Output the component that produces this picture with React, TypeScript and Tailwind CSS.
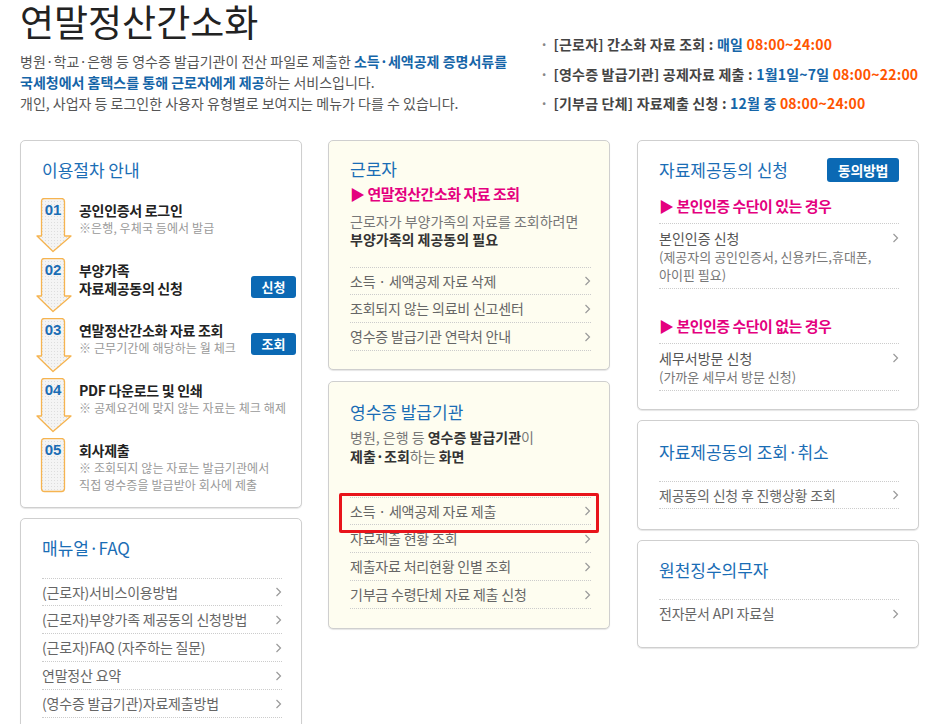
import React from 'react';

const Chevron = () => (
  <svg width="7" height="10" viewBox="0 0 7 10" className="shrink-0">
    <polyline points="1.5,1 5.5,5 1.5,9" fill="none" stroke="#9a9a9a" strokeWidth="1.2" />
  </svg>
);

function StepIcon({ num, last }: { num: string; last?: boolean }) {
  return (
    <div className="relative w-[36px] h-[54px] shrink-0">
      <svg width="36" height="56" className="absolute left-0 top-0">
        <defs>
          <pattern id={`dots-${num}`} width="3" height="3" patternUnits="userSpaceOnUse">
            <rect width="3" height="3" fill="#f4f4f4" />
            <rect width="1" height="1" fill="#dddddd" />
          </pattern>
        </defs>
        {last ? (
          <rect x="5.5" y="0.5" width="23" height="53" rx="3" fill={`url(#dots-${num})`} stroke="#f6b450" strokeWidth="1.3" />
        ) : (
          <path
            d="M5.5,38 L5.5,3.5 Q5.5,0.5 8.5,0.5 L25.5,0.5 Q28.5,0.5 28.5,3.5 L28.5,38 L35,38 L17,53.5 L1,38 Z"
            fill={`url(#dots-${num})`}
            stroke="#f6b450"
            strokeWidth="1.3"
            strokeLinejoin="round"
          />
        )}
      </svg>
      <span className="absolute left-[5px] top-[2px] w-[24px] text-center text-[15px] leading-[20px] font-bold text-[#1a6db5] font-['Liberation_Sans',sans-serif]">
        {num}
      </span>
    </div>
  );
}

const steps = [
  { num: '01', title: ['공인인증서 로그인'], sub: ['※은행, 우체국 등에서 발급'] },
  { num: '02', title: ['부양가족', '자료제공동의 신청'], sub: [], btn: '신청', btnTop: 'mt-[18px]' },
  { num: '03', title: ['연말정산간소화 자료 조회'], sub: ['※ 근무기간에 해당하는 월 체크'], btn: '조회', btnTop: 'mt-[15px]' },
  { num: '04', title: ['PDF 다운로드 및 인쇄'], sub: ['※ 공제요건에 맞지 않는 자료는 체크 해제'] },
  { num: '05', title: ['회사제출'], sub: ['※ 조회되지 않는 자료는 발급기관에서', '직접 영수증을 발급받아 회사에 제출'] },
];

const faqs = [
  '(근로자)서비스이용방법',
  '(근로자)부양가족 제공동의 신청방법',
  '(근로자)FAQ (자주하는 질문)',
  '연말정산 요약',
  '(영수증 발급기관)자료제출방법',
];

function Card({ children, cream, className = '' }: { children: React.ReactNode; cream?: boolean; className?: string }) {
  return (
    <div
      className={`border border-[#cfcfcf] rounded-[5px] shadow-[0_1px_1px_rgba(0,0,0,0.1)] ${
        cream ? 'bg-[#fefdf0]' : 'bg-white'
      } ${className}`}
    >
      {children}
    </div>
  );
}

function LinkRow({ label, first }: { label: string; first?: boolean }) {
  return (
    <div
      className={`flex items-center justify-between h-[28px] border-b border-dotted border-[#cccccc] ${
        first ? 'border-t' : ''
      }`}
    >
      <span className="text-[14px] text-[#666] tracking-[-0.2px]">{label}</span>
      <Chevron />
    </div>
  );
}

export default function App() {
  return (
    <div className="w-[931px] h-[724px] overflow-hidden bg-white font-['Noto_Sans_CJK_KR','Noto_Sans',sans-serif] text-[#555]">
      {/* Header */}
      <div className="flex h-[140px] pl-[20px]">
        <div className="w-[520px] shrink-0">
          <h1 className="text-[37px] leading-[42px] text-[#222]">연말정산간소화</h1>
          <p className="mt-[9px] text-[14px] leading-[21px] text-[#555]">
            병원·학교·은행 등 영수증 발급기관이 전산 파일로 제출한{' '}
            <b className="text-[#1565a8]">소득·세액공제 증명서류를</b>
            <br />
            <b className="text-[#1565a8]">국세청에서 홈택스를 통해 근로자에게 제공</b>하는 서비스입니다.
            <br />
            개인, 사업자 등 로그인한 사용자 유형별로 보여지는 메뉴가 다를 수 있습니다.
          </p>
        </div>
        <ul className="pt-[30px] text-[14px] leading-[29.5px] font-bold text-[#444] tracking-[0.2px]">
          <li className="flex gap-[5px]">
            <span className="text-[#888]">·</span>
            <span>
              [근로자] 간소화 자료 조회 : <span className="text-[#1565a8]">매일</span>{' '}
              <span className="text-[#ff5500]">08:00~24:00</span>
            </span>
          </li>
          <li className="flex gap-[5px]">
            <span className="text-[#888]">·</span>
            <span>
              [영수증 발급기관] 공제자료 제출 : <span className="text-[#1565a8]">1월1일~7일</span>{' '}
              <span className="text-[#ff5500]">08:00~22:00</span>
            </span>
          </li>
          <li className="flex gap-[5px]">
            <span className="text-[#888]">·</span>
            <span>
              [기부금 단체] 자료제출 신청 : <span className="text-[#1565a8]">12월 중</span>{' '}
              <span className="text-[#ff5500]">08:00~24:00</span>
            </span>
          </li>
        </ul>
      </div>

      {/* Columns */}
      <div className="flex pl-[20px]">
        {/* Left column */}
        <div className="w-[282px] shrink-0 flex flex-col gap-[10px]">
          <Card className="h-[368px] pt-[17px] pl-[15px] pr-[5px]">
            <h2 className="pl-[6px] text-[17px] leading-[24px] text-[#1a6db5]">이용절차 안내</h2>
            <div className="mt-[16px] flex flex-col gap-[6px]">
              {steps.map((s, i) => (
                <div key={s.num} className="flex">
                  <StepIcon num={s.num} last={i === steps.length - 1} />
                  <div className="flex-1 pl-[7px] pt-[3px]">
                    {s.title.map((t) => (
                      <div key={t} className="text-[14px] leading-[18px] font-bold text-[#222] tracking-[-0.3px]">
                        {t}
                      </div>
                    ))}
                    {s.sub.map((t) => (
                      <div key={t} className="text-[12px] leading-[17px] text-[#999] tracking-[0.1px]">
                        {t}
                      </div>
                    ))}
                  </div>
                  {s.btn && (
                    <div
                      className={`${s.btnTop} h-[22px] w-[45px] shrink-0 rounded-[3px] bg-[#0b69b4] text-white text-[13px] leading-[22px] font-bold text-center`}
                    >
                      {s.btn}
                    </div>
                  )}
                </div>
              ))}
            </div>
          </Card>

          <Card className="h-[260px] pt-[17px] pl-[21px] pr-[19px]">
            <h2 className="text-[17px] leading-[24px] text-[#1a6db5]">매뉴얼·FAQ</h2>
            <div className="mt-[18px]">
              {faqs.map((f, i) => (
                <LinkRow key={f} label={f} first={i === 0} />
              ))}
            </div>
          </Card>
        </div>

        {/* Middle column */}
        <div className="w-[282px] shrink-0 ml-[26px] flex flex-col gap-[11px]">
          <Card cream className="h-[230px] pt-[16px] pl-[21px] pr-[18px]">
            <h2 className="text-[17px] leading-[24px] text-[#1a6db5]">근로자</h2>
            <div className="mt-[3px] text-[15px] leading-[20px] font-bold text-[#e4007f] tracking-[-0.5px]">
              ▶ 연말정산간소화 자료 조회
            </div>
            <p className="mt-[8px] text-[14px] leading-[18px] text-[#777]">
              근로자가 부양가족의 자료를 조회하려면
              <br />
              <b className="text-[#333]">부양가족의 제공동의 필요</b>
            </p>
            <div className="mt-[19px]">
              <LinkRow label="소득 · 세액공제 자료 삭제" first />
              <LinkRow label="조회되지 않는 의료비 신고센터" />
              <LinkRow label="영수증 발급기관 연락처 안내" />
            </div>
          </Card>

          <Card cream className="h-[248px] pt-[18px] pl-[21px] pr-[18px]">
            <h2 className="text-[17px] leading-[24px] text-[#1a6db5]">영수증 발급기관</h2>
            <p className="mt-[4px] text-[14px] leading-[19px] text-[#777]">
              병원, 은행 등 <b className="text-[#333]">영수증 발급기관</b>이
              <br />
              <b className="text-[#333]">제출·조회</b>하는 <b className="text-[#333]">화면</b>
            </p>
            <div className="mt-[31px]">
              <div className="relative">
                <LinkRow label="소득 · 세액공제 자료 제출" first />
                <div className="absolute -left-[11px] -right-[8px] -top-[4px] -bottom-[8px] border-[3px] border-[#e8141b] rounded-[2px]" />
              </div>
              <LinkRow label="자료제출 현황 조회" />
              <LinkRow label="제출자료 처리현황 인별 조회" />
              <LinkRow label="기부금 수령단체 자료 제출 신청" />
            </div>
          </Card>
        </div>

        {/* Right column */}
        <div className="w-[282px] shrink-0 ml-[27px] flex flex-col gap-[10px]">
          <Card className="h-[270px] pt-[17px] pl-[21px] pr-[19px]">
            <div className="flex items-center justify-between">
              <h2 className="text-[17px] leading-[24px] text-[#1a6db5]">자료제공동의 신청</h2>
              <div className="h-[24px] w-[72px] rounded-[3px] bg-[#0b69b4] text-white text-[14px] leading-[24px] font-bold text-center tracking-[-0.3px]">
                동의방법
              </div>
            </div>
            <div className="mt-[14px] text-[15px] leading-[20px] font-bold text-[#e4007f] tracking-[-0.5px]">
              ▶ 본인인증 수단이 있는 경우
            </div>
            <div className="mt-[7px] border-t border-b border-dotted border-[#cccccc] pt-[5px] pb-[4px] flex justify-between">
              <div>
                <div className="text-[14px] leading-[19px] text-[#555]">본인인증 신청</div>
                <div className="text-[13px] leading-[18px] text-[#777]">
                  (제공자의 공인인증서, 신용카드,휴대폰,
                  <br />
                  아이핀 필요)
                </div>
              </div>
              <div className="pt-[4px]">
                <Chevron />
              </div>
            </div>
            <div className="mt-[27px] text-[15px] leading-[20px] font-bold text-[#e4007f] tracking-[-0.5px]">
              ▶ 본인인증 수단이 없는 경우
            </div>
            <div className="mt-[7px] border-t border-b border-dotted border-[#cccccc] pt-[5px] pb-[4px] flex justify-between">
              <div>
                <div className="text-[14px] leading-[19px] text-[#555]">세무서방문 신청</div>
                <div className="text-[13px] leading-[18px] text-[#777]">(가까운 세무서 방문 신청)</div>
              </div>
              <div className="pt-[4px]">
                <Chevron />
              </div>
            </div>
          </Card>

          <Card className="h-[110px] pt-[19px] pl-[21px] pr-[19px]">
            <h2 className="text-[17px] leading-[24px] text-[#1a6db5]">자료제공동의 조회·취소</h2>
            <div className="mt-[17px]">
              <LinkRow label="제공동의 신청 후 진행상황 조회" first />
            </div>
          </Card>

          <Card className="h-[108px] pt-[17px] pl-[21px] pr-[19px]">
            <h2 className="text-[17px] leading-[24px] text-[#1a6db5]">원천징수의무자</h2>
            <div className="mt-[17px]">
              <div className="flex items-center justify-between h-[28px] border-t border-dotted border-[#cccccc]">
                <span className="text-[14px] text-[#666] tracking-[-0.2px]">전자문서 API 자료실</span>
                <Chevron />
              </div>
            </div>
          </Card>
        </div>
      </div>
    </div>
  );
}
